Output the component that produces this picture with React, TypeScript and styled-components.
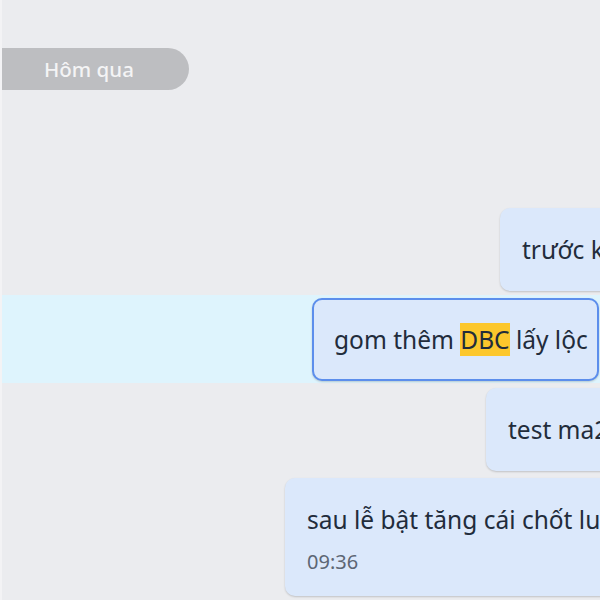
import React from "react";
import styled, { createGlobalStyle } from "styled-components";

const Global = createGlobalStyle`
  html, body { margin: 0; padding: 0; background: #ebecef; }
  body { font-family: "Noto Sans", "Open Sans", "Liberation Sans", sans-serif; }
`;

const Screen = styled.div`
  width: 600px;
  height: 600px;
  overflow: hidden;
  background: #ebecef;
  display: flex;
  flex-direction: column;
  border-left: 2px solid #f3f3f5;
  box-sizing: border-box;
`;

const DateRow = styled.div`
  display: flex;
  padding-top: 48px;
  margin-left: -2px;
`;

const DatePill = styled.div`
  width: 145px;
  height: 42px;
  padding-left: 44px;
  background: #bdbec1;
  color: #f4f4f5;
  border-radius: 0 21px 21px 0;
  font-size: 20.5px;
  font-weight: 500;
  display: flex;
  align-items: center;
`;

const Row = styled.div<{ $offset: number; $top: number; $highlight?: boolean }>`
  display: flex;
  margin-top: ${(p) => p.$top}px;
  padding-left: ${(p) => p.$offset}px;
  padding-top: ${(p) => (p.$highlight ? 3 : 0)}px;
  padding-bottom: ${(p) => (p.$highlight ? 2 : 0)}px;
  background: ${(p) => (p.$highlight ? "#def4fd" : "transparent")};
  margin-left: -2px;
  white-space: nowrap;
`;

const Bubble = styled.div<{ $active?: boolean }>`
  flex: none;
  box-sizing: border-box;
  background: #dbe8fb;
  border-radius: 10px;
  border: 2px solid ${(p) => (p.$active ? "#5c8eec" : "transparent")};
  box-shadow: 0 1px 2px rgba(0, 0, 0, 0.18);
  padding: 23px 9px 23px 20px;
  color: #222c3b;
  font-size: 24.5px;
  line-height: 33px;
`;

const Mark = styled.span`
  background: #fcc72c;
`;

const Time = styled.div`
  margin-top: 14px;
  margin-bottom: -3px;
  font-size: 20px;
  line-height: 24px;
  color: #5d6674;
`;

export default function App() {
  return (
    <>
      <Global />
      <Screen>
        <DateRow>
          <DatePill>Hôm qua</DatePill>
        </DateRow>
        <Row $offset={500} $top={118}>
          <Bubble>trước khi chốt</Bubble>
        </Row>
        <Row $offset={312} $top={4} $highlight>
          <Bubble $active>
            gom thêm <Mark>DBC</Mark> lấy lộc
          </Bubble>
        </Row>
        <Row $offset={486} $top={5}>
          <Bubble>test ma20</Bubble>
        </Row>
        <Row $offset={285} $top={7}>
          <Bubble>
            sau lễ bật tăng cái chốt lui
            <Time>09:36</Time>
          </Bubble>
        </Row>
      </Screen>
    </>
  );
}
